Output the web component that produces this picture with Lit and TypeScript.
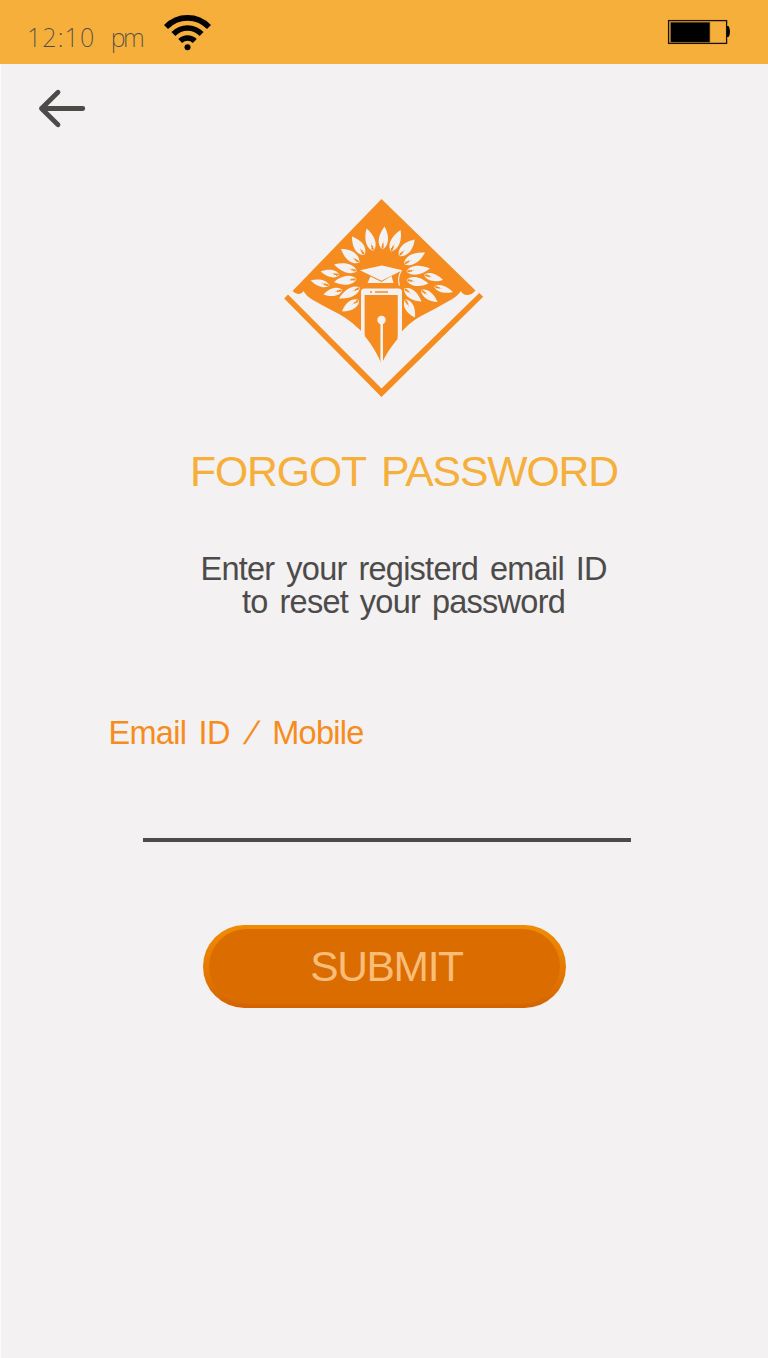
import { LitElement, html, css, svg } from 'lit';
import { customElement } from 'lit/decorators.js';

// Each leaf: [base x, base y, tip x, tip y, width]
const LEAVES: number[][] = [
  [364.5, 255, 352, 236.5, 10],
  [373.5, 251, 366.5, 228.5, 9.5],
  [382.5, 249.5, 384.5, 226.5, 9.5],
  [391, 251.5, 400.5, 230, 9.5],
  [399, 256, 414.7, 239.5, 10],
  [404, 264, 425, 252.5, 10],
  [359.5, 262.5, 341, 249, 10],
  [357, 271, 334, 264.5, 9],
  [356.5, 279, 334, 282, 9],
  [360, 287.5, 339, 298.5, 9],
  [339.5, 275, 320.5, 271.5, 7.5],
  [329.5, 285.5, 310.5, 280.5, 7],
  [342.5, 290, 323.5, 294.5, 8],
  [406.5, 271.5, 430, 268.5, 9],
  [406.5, 280, 428.5, 283.5, 9],
  [404, 288.5, 421.5, 301.5, 9],
  [424, 275, 443, 280, 7.5],
  [434, 286.5, 453, 292, 7],
  [421, 290, 437.5, 302, 8],
  [359, 300, 342, 311.5, 9],
  [405, 299.5, 415, 317.5, 9],
];

function leaf([bx, by, tx, ty, w]: number[]) {
  const len = Math.hypot(tx - bx, ty - by);
  const angle = (Math.atan2(ty - by, tx - bx) * 180) / Math.PI;
  const h = w / 2;
  return svg`<g transform="translate(${bx} ${by}) rotate(${angle})">
    <path fill="#f3f1f2" d="M0 0C${len * 0.15} ${-h * 1.2} ${len * 0.55} ${-h * 1.4} ${len} 0C${len * 0.65} ${h * 1.2} ${len * 0.2} ${h * 1.4} 0 0Z"/>
    <path fill="#f68c20" d="M0 0L3.2 -1.5L3.6 -.6L6 -1.2L5.4 -.3L9 0L5.4 .3L5.8 1L3.4 .6L2.8 1.2Z"/>
  </g>`;
}

@customElement('app-root')
export class AppRoot extends LitElement {
  static styles = css`
    :host {
      display: flex;
      flex-direction: column;
      box-sizing: border-box;
      width: 768px;
      height: 1358px;
      overflow: hidden;
      background: #f3f1f2;
      font-family: 'Liberation Sans', Arial, sans-serif;
      color: #4d4b4a;
    }
    svg { display: block; flex: none; }
    .status {
      display: flex;
      height: 64px;
      flex: none;
      background: #f5af3a;
    }
    .time {
      width: 136px;
      padding: 20px 0 0 27px;
      font: 200 25px/34px 'Noto Sans', sans-serif;
      letter-spacing: 1.1px;
      word-spacing: 8px;
      white-space: pre;
    }
    .meridiem { letter-spacing: -2.6px; }
    .wifi { margin-top: 14px; }
    .battery { margin: 19px 37px 0 auto; }
    main {
      display: flex;
      flex-direction: column;
      flex: 1;
      border-left: 1px solid #fcfcfc;
    }
    .back {
      margin: 24px 0 0 36px;
      padding: 0;
      border: 0;
      background: none;
      align-self: flex-start;
    }
    .logo { margin: 68px 0 0 282px; }
    h1, p { margin: 0; font-weight: 400; white-space: nowrap; }
    h1 {
      margin: 48px 0 0 189px;
      font-size: 42.7px;
      line-height: 50px;
      letter-spacing: -1.1px;
      word-spacing: 5px;
      color: #f5af3a;
    }
    .hint {
      margin-top: 57px;
      font-size: 32.5px;
      line-height: 33px;
      letter-spacing: -0.75px;
      word-spacing: 3.6px;
    }
    .hint span { display: block; }
    .l1 { padding-left: 199.5px; }
    .l2 { padding-left: 241px; }
    .label {
      margin: 95px 0 0 107.5px;
      font-size: 32.5px;
      line-height: 38px;
      letter-spacing: -0.7px;
      word-spacing: 4px;
      color: #f68c20;
    }
    .slash {
      display: inline-block;
      margin: 0 5px 0 4.5px;
      transform: skewX(-20deg);
    }
    .field {
      width: 488px;
      height: 90px;
      box-sizing: border-box;
      margin-left: 142px;
      border-bottom: 4px solid #4d4b4a;
    }
    .submit {
      width: 363px;
      height: 83px;
      margin: 83px 0 0 202px;
      padding: 4px 6px;
      box-sizing: border-box;
      border: 0;
      border-radius: 42px;
      background: linear-gradient(#f08c00, #e57a00 55%, #d36300);
      font: 400 42.5px/75px 'Liberation Sans', sans-serif;
      letter-spacing: -1.35px;
      color: #f9bd78;
    }
    .face {
      display: block;
      height: 75px;
      box-sizing: border-box;
      padding-left: 4px;
      border-radius: 38px;
      background: #db6d00;
    }
  `;

  render() {
    return html`
      <header class="status">
        <div class="time">12:10 <span class="meridiem">pm</span></div>
        <svg class="wifi" width="49" height="37" viewBox="163 14 49 37">
          <g fill="none" stroke="#000" stroke-width="5.6">
            <path d="M166 27C178 14.8 197 14.8 209 27"/>
            <path d="M173.4 34C181.5 26 193.5 26 201.6 34"/>
            <path d="M180.2 41C184.4 37 190.6 37 194.8 41"/>
          </g>
          <circle cx="187.5" cy="47.2" r="3"/>
        </svg>
        <svg class="battery" width="64" height="26" viewBox="667 19 64 26">
          <rect x="668.6" y="20.6" width="58" height="22.8" fill="none" stroke="#17120a" stroke-width="1.3"/>
          <rect x="670.7" y="22.2" width="39.2" height="20" fill="#000" stroke="#7a5512" stroke-width=".6"/>
          <path d="M727 26H728.5Q730 28 730 31.5T728.5 37H727Z"/>
        </svg>
      </header>
      <main>
        <button class="back" aria-label="Back">
          <svg width="50" height="42" viewBox="37 88 50 42">
            <path d="M58 92.3L41.5 108.5L58 124.7M41.5 108.5H82.8" fill="none" stroke="#4d4b4a" stroke-width="4.8" stroke-linecap="round" stroke-linejoin="round"/>
          </svg>
        </button>
        <svg class="logo" width="202" height="200" viewBox="283 198 202 200">
          <path fill="#f68c20" d="M381.5 199L475.5 290.5Q472 294.5 468 295Q463 295.5 461 291Q457 297 447 302Q435 309 422 315.5Q409 322 398 336Q386 351 381.5 364Q377 350 366 336Q352 321 339 314Q325 307 313 300Q306 296 303.5 291Q302 294 298 294Q295 293.5 292.5 291Z"/>
          <path fill="#f68c20" d="M284.2 298.6L288 294.6L381.5 388.6L479.2 293L483.2 296.7L381.5 397Z"/>
          ${LEAVES.map(leaf)}
          <path fill="#f3f1f2" d="M361 340V292Q361 288.5 364.5 288.5H398.5Q402 288.5 402 292V336L397.5 340V295H364.8V340Z"/>
          <path fill="#f68c20" d="M364.8 295H397.5V339Q386 353 381.5 364Q376 350 364.8 336Z"/>
          <path stroke="#f68c20" stroke-width="1.3" d="M370 292h2M375 292h13"/>
          <circle cx="381.5" cy="320" r="4.2" fill="#f3f1f2"/>
          <path stroke="#f3f1f2" stroke-width="2.6" d="M381.7 320V366"/>
          <path fill="#f3f1f2" d="M360 270.3L382 265.5L402.3 270.3L381.5 280.7Z"/>
          <path fill="#f3f1f2" d="M370.5 276.5L381.5 282L391.5 276L393.5 283H367.5Z"/>
          <path fill="none" stroke="#f3f1f2" stroke-width="1.1" d="M401.3 270.5Q397 278 399.5 285.5"/>
        </svg>
        <h1>FORGOT PASSWORD</h1>
        <p class="hint"><span class="l1">Enter your registerd email ID</span><span class="l2">to reset your password</span></p>
        <p class="label">Email ID <span class="slash">/</span> Mobile</p>
        <div class="field" role="textbox"></div>
        <button class="submit"><span class="face">SUBMIT</span></button>
      </main>
    `;
  }
}
